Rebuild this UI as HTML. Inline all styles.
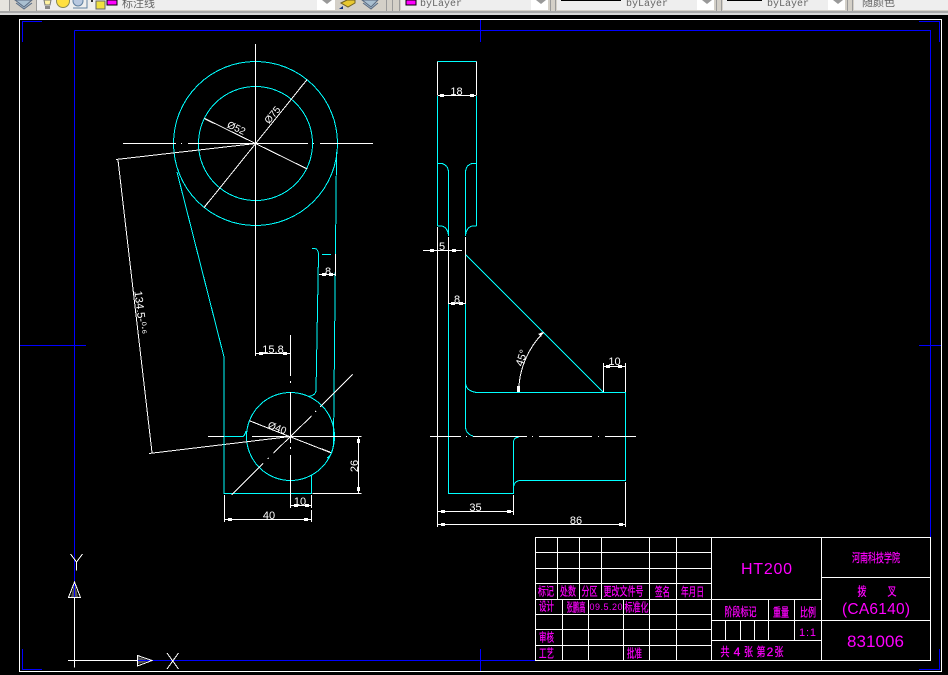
<!DOCTYPE html>
<html>
<head>
<meta charset="utf-8">
<style>
html,body{margin:0;padding:0;background:#000;width:948px;height:675px;overflow:hidden}
svg{display:block;position:absolute;left:0;top:0}
.l{shape-rendering:crispEdges;fill:none}
.w{stroke:#fff;stroke-width:1}
.c{stroke:#0ff;stroke-width:1}
.b{stroke:#00f;stroke-width:1}
.wt{fill:#fff;font-family:"Liberation Sans",sans-serif;font-size:11px;text-anchor:middle}
.m{fill:#f0f;font-family:"Liberation Sans","Noto Sans CJK SC",sans-serif;font-size:12px;text-anchor:middle;stroke:#f0f;stroke-width:.25}
.ml{fill:#f0f;font-family:"Liberation Sans",sans-serif;text-anchor:middle}
.tb{fill:#666;font-family:"Liberation Mono","Noto Sans CJK SC",monospace;font-size:10px}
</style>
</head>
<body>
<svg width="948" height="675" viewBox="0 0 948 675" xmlns="http://www.w3.org/2000/svg">
<rect width="948" height="675" fill="#000"/>

<!-- toolbar -->
<rect x="0" y="0" width="948" height="15" fill="#d4d0c8"/>
<rect x="0" y="11" width="948" height="2" fill="#a8a8a8"/>
<rect x="0" y="13" width="948" height="2" fill="#d8d8d8"/>
<rect x="0" y="0" width="9" height="11" fill="#e6e4df"/>
<g fill="#eeeeee">
<rect x="37" y="0" width="298" height="10"/>
<rect x="401" y="0" width="147" height="10"/>
<rect x="557" y="0" width="157" height="10"/>
<rect x="723" y="0" width="122" height="10"/>
<rect x="854" y="0" width="94" height="10"/>
</g>
<g fill="#fff">
<rect x="317" y="0" width="18" height="10"/>
<rect x="531" y="0" width="17" height="10"/>
<rect x="697" y="0" width="17" height="10"/>
<rect x="828" y="0" width="17" height="10"/>
</g>
<g fill="#999">
<path d="M322 0h10l-5 4z"/>
<path d="M536 0h10l-5 4z"/>
<path d="M702 0h10l-5 4z"/>
<path d="M833 0h10l-5 4z"/>
</g>
<g class="l" stroke="#9a9a9a">
<path d="M9.500 0V11M36.500 0V11M386.500 0V11M392.500 0V11M399.500 0V11M550.500 0V11M555.500 0V11M716.500 0V11M721.500 0V11M847.500 0V11M852.500 0V11"/>
</g>
<!-- layer icons -->
<path d="M15 0 L24 7 L32 0Z M16 3 L24 9 L32 3" fill="#a9bfd0" stroke="#5a6a80" stroke-width="1"/>
<path d="M44 0h7l-1 5h-5z" fill="#fff3a0" stroke="#777"/>
<rect x="45" y="6" width="5" height="3" fill="#888"/>
<circle cx="63" cy="1" r="6.500" fill="#ffe040" stroke="#8a8a50"/>
<circle cx="78" cy="1" r="5" fill="#b8c8e0" stroke="#6080a0"/>
<path d="M73 8H87V0" fill="none" stroke="#6080a0"/>
<rect x="96" y="1" width="9" height="8" fill="#f0e040" stroke="#666"/>
<rect x="91" y="0" width="2" height="2" fill="#333"/>
<rect x="107" y="0" width="10" height="5" fill="#f0f" stroke="#000"/>
<text x="122" y="7" class="tb" style="font-size:11px;font-family:'Liberation Sans','Noto Sans CJK SC',sans-serif">标注线</text>
<path d="M341 3 L347 0 L355 0 L355 3 L348 7Z" fill="#e8c830" stroke="#706020"/>
<path d="M339 9l4-3v3z" fill="#103080"/>
<path d="M362 0 L371 7 L378 0Z M363 3 L371 9 L378 3" fill="#a9bfd0" stroke="#5a6a80"/>
<rect x="406" y="0" width="10" height="5" fill="#f0f" stroke="#000"/>
<text x="420" y="6" class="tb">byLayer</text>
<rect x="561" y="0" width="60" height="1" fill="#000"/>
<text x="626" y="6" class="tb">byLayer</text>
<rect x="727" y="0" width="35" height="1" fill="#000"/>
<text x="767" y="6" class="tb">byLayer</text>
<text x="862" y="6" class="tb" style="font-size:11px;font-family:'Liberation Sans','Noto Sans CJK SC',sans-serif">随颜色</text>

<!-- frames -->
<g class="l">
<rect x="19.500" y="19.500" width="922" height="652" class="w"/>
<path class="b" d="M74.500 30.500H930.500V660.500M74.500 30.500V600M152 660.500H930.500"/>
<path class="b" d="M22.500 42V21.500H42M919 21.500H939.500V42M22.500 649V669.500H42M919 669.500H939.500V649"/>
<path class="b" d="M480.500 20V42M480.500 649V671M20 345.500H86M919 345.500H941"/>
</g>

<!-- title block -->
<g class="l w">
<rect x="535.500" y="537.500" width="395" height="123"/>
<path d="M535.500 552.500H711.500M535.500 568.500H711.500M535.500 583.500H711.500M535.500 599.500H821.500M535.500 614.500H711.500M535.500 629.500H711.500M535.500 645.500H711.500"/>
<path d="M711.500 620.500H930.500M711.500 640.500H821.500M821.500 577.500H930.500"/>
<path d="M557.500 537.500V599.500M579.500 537.500V599.500M601.500 537.500V599.500"/>
<path d="M649.500 537.500V660.500M676.500 537.500V660.500M711.500 537.500V660.500M821.500 537.500V660.500"/>
<path d="M562.500 599.500V660.500M588.500 599.500V660.500M623.500 599.500V660.500"/>
<path d="M768.500 599.500V640.500M794.500 599.500V640.500M725.500 620.500V640.500M740.500 620.500V640.500M754.500 620.500V640.500"/>
</g>
<g class="m">
<text x="546" y="595.500" textLength="16" lengthAdjust="spacingAndGlyphs">标记</text>
<text x="568" y="595.500" textLength="16" lengthAdjust="spacingAndGlyphs">处数</text>
<text x="589.500" y="595.500" textLength="16" lengthAdjust="spacingAndGlyphs">分区</text>
<text x="623.500" y="595.500" textLength="40" lengthAdjust="spacingAndGlyphs">更改文件号</text>
<text x="662.500" y="596" textLength="15" lengthAdjust="spacingAndGlyphs">签名</text>
<text x="692.500" y="596" textLength="23" lengthAdjust="spacingAndGlyphs">年月日</text>
<text x="546.500" y="610.500" textLength="15" lengthAdjust="spacingAndGlyphs">设计</text>
<text x="576" y="611.500" textLength="19" lengthAdjust="spacingAndGlyphs">张鹏高</text>
<text x="636.500" y="611.500" textLength="24" lengthAdjust="spacingAndGlyphs">标准化</text>
<text x="546.500" y="641.500" textLength="15" lengthAdjust="spacingAndGlyphs">审核</text>
<text x="546.500" y="657.500" textLength="15" lengthAdjust="spacingAndGlyphs">工艺</text>
<text x="634.500" y="657.500" textLength="15" lengthAdjust="spacingAndGlyphs">批准</text>
<text x="740.500" y="616" textLength="32" lengthAdjust="spacingAndGlyphs">阶段标记</text>
<text x="781" y="616.500" textLength="16" lengthAdjust="spacingAndGlyphs">重量</text>
<text x="808" y="616.500" textLength="16" lengthAdjust="spacingAndGlyphs">比例</text>
<text x="876" y="562" textLength="48" lengthAdjust="spacingAndGlyphs">河南科技学院</text>
<text x="862" y="595.500" textLength="9" lengthAdjust="spacingAndGlyphs">拨</text>
<text x="892" y="595.500" textLength="9" lengthAdjust="spacingAndGlyphs">叉</text>
<text x="725" y="656" textLength="9" lengthAdjust="spacingAndGlyphs">共</text>
<text x="737" y="656">4</text>
<text x="748.500" y="656" textLength="9" lengthAdjust="spacingAndGlyphs">张</text>
<text x="761" y="656" textLength="9" lengthAdjust="spacingAndGlyphs">第</text>
<text x="770" y="656">2</text>
<text x="779" y="656" textLength="9" lengthAdjust="spacingAndGlyphs">张</text>
</g>
<g class="ml">
<text x="606" y="610" font-size="9" textLength="33">09.5.20</text>
<text x="766.500" y="574" font-size="16" textLength="51">HT200</text>
<text x="876" y="614" font-size="15.500" textLength="68">(CA6140)</text>
<text x="875.500" y="647" font-size="17" textLength="57">831006</text>
<text x="807.500" y="636" font-size="11" textLength="17">1:1</text>
</g>

<!-- UCS icon -->
<g class="l">
<path class="b" d="M74.500 560V598M137 660.500H180"/>
<path d="M74.500 582L71 597H78Z" fill="#555" stroke="none"/>
<path d="M138 657V664L150 660.500Z" fill="#555"/>
<path class="b" d="M74.500 582V597M137 660.500H152"/>
<path class="w" d="M74.500 598V667.500M68 660.500H137.500"/>
<path class="w" d="M74.500 582L68.500 597.500H80.500ZM137.500 655.500V666L152 660.500Z"/>
<path class="w" d="M70.500 554L76.500 562L82.500 554M76.500 562V570.500M167 653L178.500 669M178.500 653L167 669"/>
</g>

<!-- Left view -->
<g class="l">
<circle class="c" cx="255.500" cy="143.500" r="82"/>
<circle class="c" cx="255.500" cy="143.500" r="57"/>
<circle class="c" cx="290.500" cy="436.500" r="44"/>
<path class="w" d="M123 143.500H176M181 143.500H182M188 143.500H308M313 143.500H314M320 143.500H373M255.500 44V356"/>
<path class="w" d="M307.300 79.300L204 207.700M204.300 118.300L307.300 169M255.500 143.500L116 159.500M118 160L152 452.500M149 453.500L290.500 436.500"/>
<path class="w" stroke-width="2" d="M300 88L306 81M205 206L211 199M205 119L213 123M299 165L307 169"/>
<path class="c" d="M177 172L224 357V493.500H311.500V475M224 436.500H243M243 436.500Q245 435 246 431"/>
<path class="c" d="M336.500 152L333.500 443Q333 455 327 458"/>
<path class="c" d="M312 248.500H315Q318 249 318.500 254L316 391Q315.500 395 309 396.500M322 254.500H331"/>
<path class="w" d="M208 436.500H224M252 436.500H361.500M312.500 493.500H361.500"/>
<path class="w" d="M290.500 335V376M290.500 381V383M290.500 392V443M290.500 447V449M290.500 455V508"/>
<path class="w" d="M352.700 374.300L320 407M316 411L315 412M311.500 416L273.500 453M268.500 458L267.500 459M263 463.500L231.700 495"/>
<path class="w" d="M249.500 420.800L331 452.800"/>
<path class="w" stroke-width="2" d="M250 421L258 424M322 449L330 452"/>
<path class="w" d="M255.500 353.500H290.500M319 274.500H335.500M335.500 254V276M358.500 436V493M290.500 505.500H311.500M311.500 495V508M224.500 495V522M311.500 510V522M224.500 519.500H311.500"/>
<path fill="#fff" stroke="none" d="M259 352h4v3h-4zM283 352h4v3h-4zM322 273h4v3h-4zM329 273h4v3h-4zM357 439h3v4h-3zM357 487h3v4h-3zM294 504h4v3h-4zM305 504h4v3h-4zM228 518h4v3h-4zM304 518h4v3h-4z"/>
</g>
<text class="wt" x="273" y="353">15.8</text>
<text class="wt" x="328" y="275">8</text>
<text class="wt" x="300" y="505">10</text>
<text class="wt" x="269" y="519">40</text>
<text class="wt" transform="translate(358,466) rotate(-90)">26</text>
<text class="wt" style="font-size:10px" transform="translate(276,431) rotate(21)">Ø40</text>
<text class="wt" style="font-size:10px" transform="translate(235,131) rotate(25)">Ø52</text>
<text class="wt" style="font-size:10px" transform="translate(275,117) rotate(-51)">Ø75</text>
<text class="wt" transform="translate(137,313) rotate(83)">134.5-⁰⋅⁶</text>

<!-- Right view -->
<g class="l">
<path class="c" d="M437.500 61.500H476.500"/>
<path class="w" d="M437.500 61.500V95M476.500 61.500V95M437.500 95.500H476.500"/>
<path class="c" d="M437.500 96V226M476.500 96V226"/>
<path class="c" d="M437.500 163.500H442Q448 165 448.500 172V236M476.500 163.500H472Q466 165 465.500 172V236"/>
<path class="c" d="M437.500 226H442Q448 228 448.500 236M476.500 226H472Q466 228 465.500 236"/>
<path class="w" d="M437.500 227V527M448.500 237V304M465.500 237V304M423 250.500H462M448.500 303.500H465.500"/>
<path class="c" d="M448.500 304V493.500H513.500V441.500Q514 437.500 519 437M465.500 304V427Q466 434 473 436"/>
<path class="c" d="M465.500 383Q466 391 476.500 392.500H625.500V480.500H520Q514 481 513.500 488"/>
<path class="c" d="M466 255L603.500 392.500"/>
<path class="w" d="M430 436.500H461M466 436.500H467M473 436.500H527M532 436.500H533M539 436.500H592M598 436.500H599M605 436.500H636"/>
<path class="w" d="M603.500 363V392M625.500 363V392M603.500 366.500H625.500M513.500 495V515M437.500 511.500H513.500M625.500 482V527M437.500 524.500H625.500"/>
<path class="w" d="M518.700 392A84.800 84.800 0 0 1 543.500 332.500"/>
<path fill="#fff" stroke="none" d="M517 386h3v6h-3zM538 334l5-2-2 5zM440 94h4v3h-4zM470 94h4v3h-4zM430 249h4v3h-4zM452 249h4v3h-4zM451 302h4v3h-4zM459 302h4v3h-4zM606 365h4v3h-4zM618 365h4v3h-4zM441 510h4v3h-4zM507 510h4v3h-4zM441 523h4v3h-4zM619 523h4v3h-4z"/>
</g>
<text class="wt" x="456.500" y="95">18</text>
<text class="wt" x="442" y="250">5</text>
<text class="wt" x="457" y="303">8</text>
<text class="wt" x="614.500" y="365">10</text>
<text class="wt" x="475.500" y="511">35</text>
<text class="wt" x="576" y="524">86</text>
<text class="wt" transform="translate(525,359) rotate(-72)">45°</text>
</svg>
</body>
</html>
